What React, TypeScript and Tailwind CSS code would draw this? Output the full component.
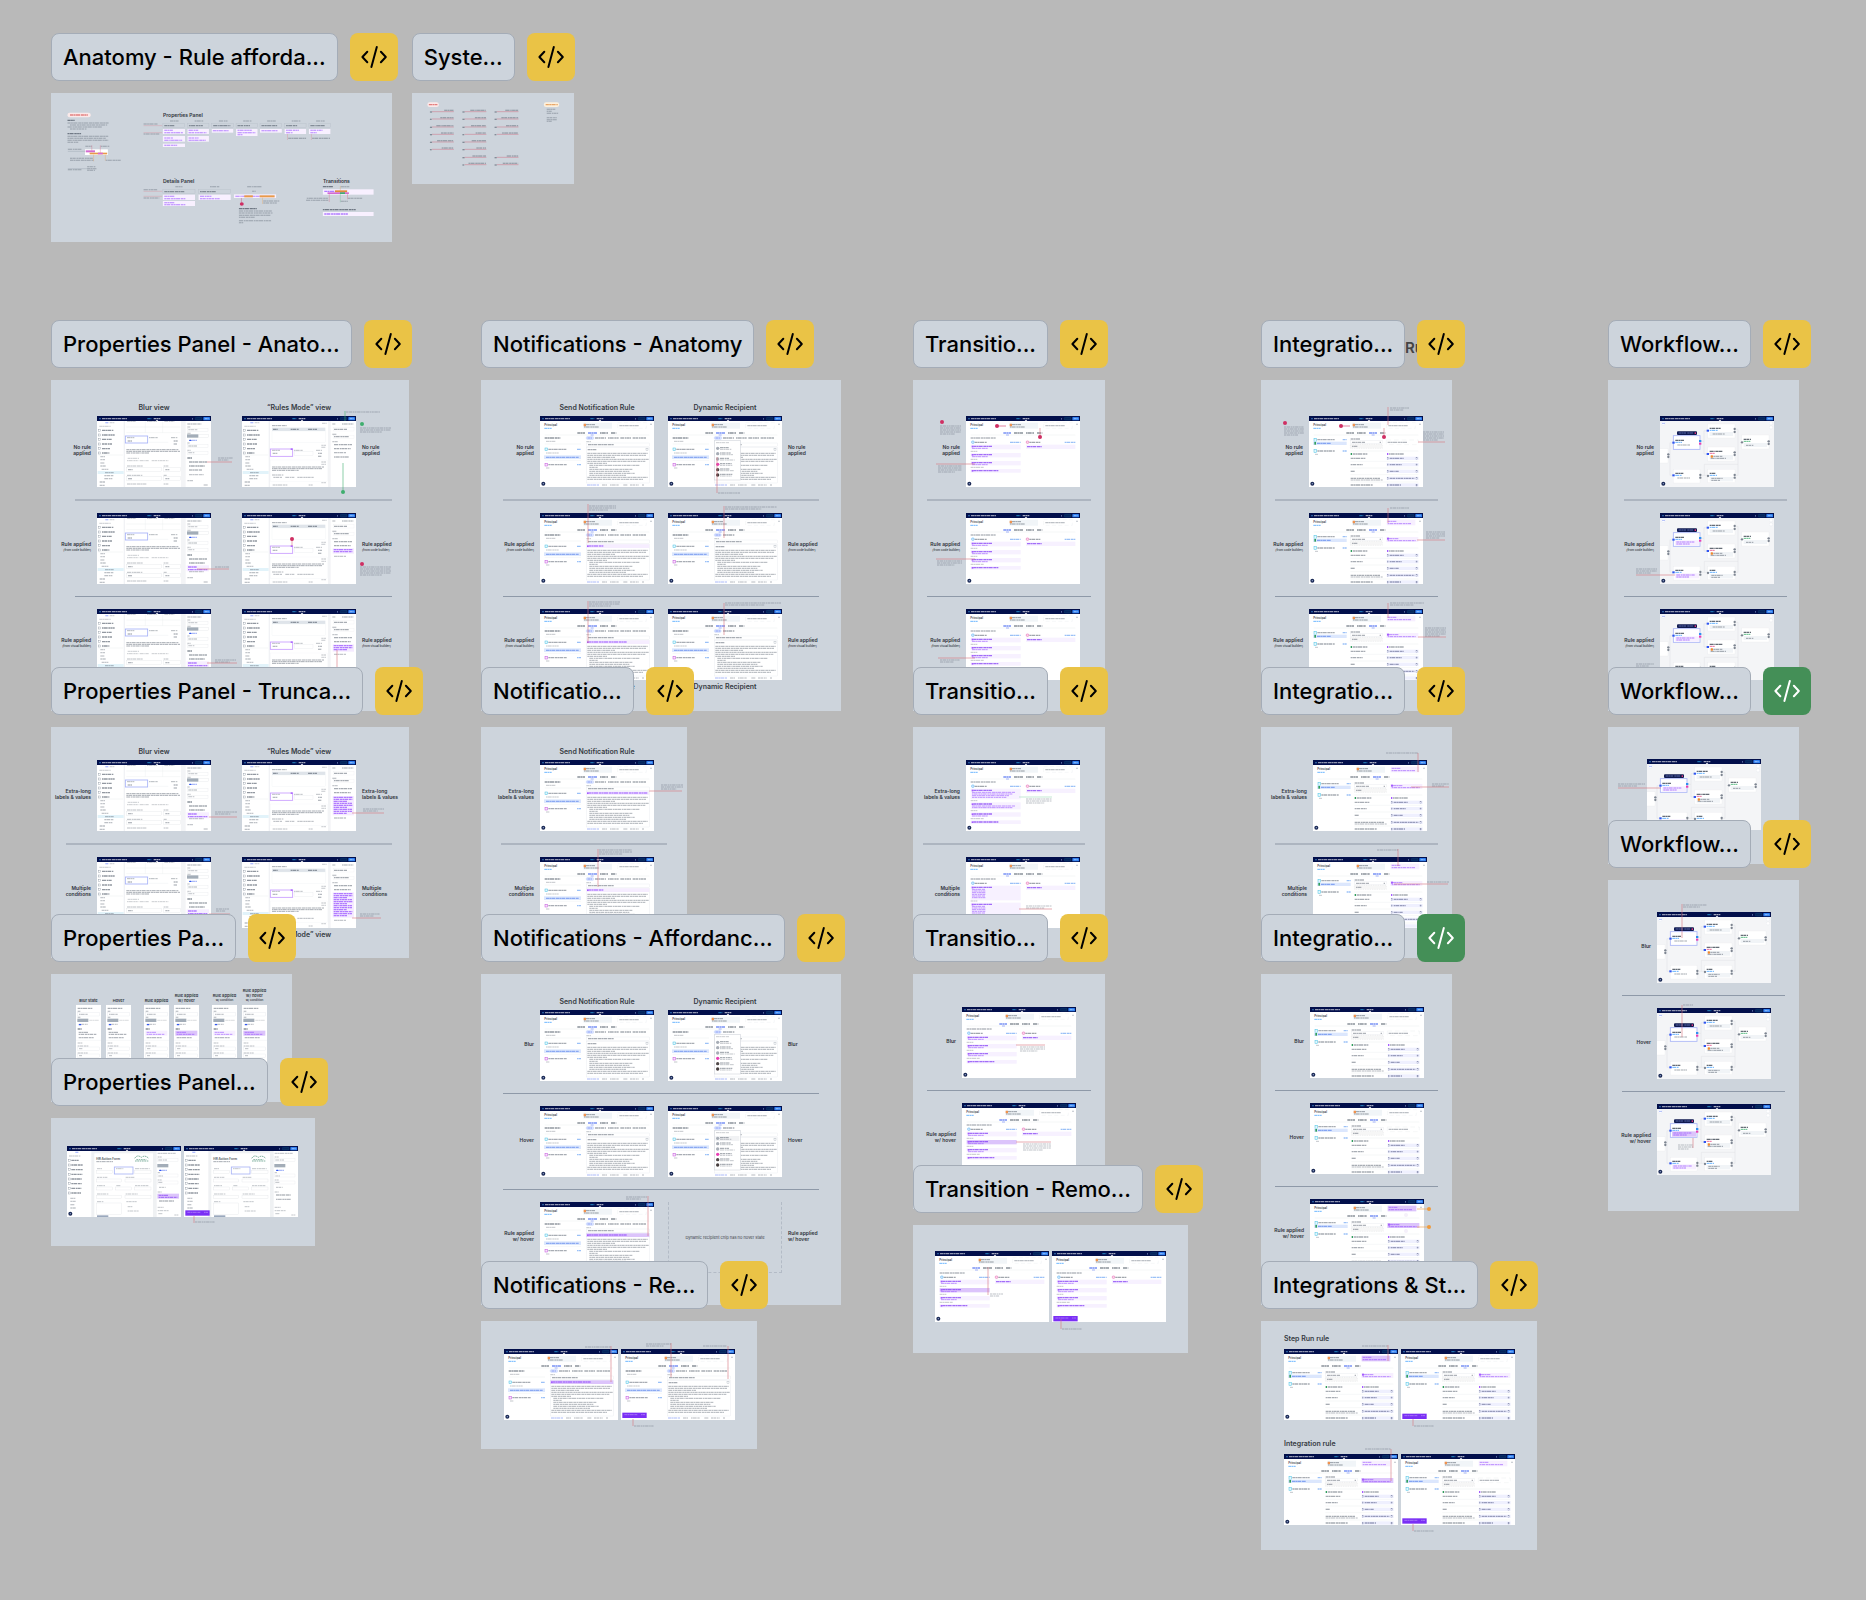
import React from "react";

type Row = number[];

/* ---------- drawing helpers (three units to one canvas pixel) ---------- */

const DASHES = ["9 1 5 1 12 2", "5 1 11 2 7 1", "12 2 4 1 8 1", "7 1 8 2 5 1"];

function Words({ at, c = "#4b5563", h = 4, o = 0.5 }: { at: Row[]; c?: string; h?: number; o?: number }) {
  return (
    <g stroke={c} strokeWidth={h} opacity={o * 0.8}>
      {at.map(([x, y, w], i) => (
        <line key={i} x1={x} y1={y} x2={x + w} y2={y} strokeDasharray={DASHES[i % 4]} />
      ))}
    </g>
  );
}

function Boxes({ at, f = "none", s = "none", w = 1 }: { at: Row[]; f?: string; s?: string; w?: number }) {
  return (
    <g fill={f} stroke={s} strokeWidth={w}>
      {at.map(([x, y, bw, bh], i) => (
        <rect key={i} x={x} y={y} width={bw} height={bh} />
      ))}
    </g>
  );
}

function Rules({ at, s = "#e5e7eb", w = 1 }: { at: Row[]; s?: string; w?: number }) {
  return (
    <g stroke={s} strokeWidth={w}>
      {at.map(([x1, y1, x2, y2], i) => (
        <line key={i} x1={x1} y1={y1} x2={x2} y2={y2} />
      ))}
    </g>
  );
}

function TopBar() {
  return (
    <g>
      <rect width="342" height="15" fill="#020f4b" />
      <Words at={[[15, 8, 75]]} c="#fff" o={0.7} />
      <Words at={[[151, 8, 12]]} c="#38bdf8" o={0.7} />
      <Words at={[[170, 8, 20]]} c="#fff" o={0.8} />
      <rect x="7" y="6" width="4" height="4" fill="#3b7fc4" />
      <rect x="286" y="6" width="2" height="5" fill="#7b8dc0" />
      <rect x="295" y="4" width="20" height="8" rx="3" fill="#06235c" stroke="#135a86" />
      <rect x="319" y="3" width="20" height="10" rx="2" fill="#2f7ff0" />
      <Words at={[[323, 8, 12]]} c="#fff" o={0.5} />
      <path d="M176 15l4-4 4 4z" fill="#fff" />
    </g>
  );
}

function Help() {
  return (
    <g>
      <circle cx="10" cy="203" r="6" fill="#1b2a55" />
      <circle cx="10" cy="203" r="2" fill="#93a4cf" />
    </g>
  );
}

function Sidebar() {
  return (
    <g>
      <Rules at={[[82, 15, 82, 213]]} s="#f1f2f5" w={4} />
      <Words at={[[25, 20, 10]]} c="#3b5bfd" />
      <Words at={[[38, 20, 14]]} o={0.3} />
      <Words at={[[7, 31, 34]]} o={0.3} />
      <Boxes at={[[5, 40, 6, 6], [5, 54, 6, 6], [5, 67, 6, 6], [5, 81, 6, 6], [5, 95, 6, 6], [5, 108, 6, 6]]} s="#7b8592" />
      <Words at={[[15, 43, 34], [15, 57, 38], [15, 70, 30], [15, 84, 30], [15, 98, 24], [15, 111, 22]]} o={0.75} />
      <Rules at={[[4, 117, 78, 117]]} />
      <Words at={[[10, 122, 14], [10, 131, 14], [10, 141, 12], [10, 150, 16], [14, 160, 20]]} o={0.4} />
      <rect x="2" y="165" width="78" height="9" fill="#e2f3fa" />
      <Words at={[[24, 170, 26], [22, 179, 28], [22, 188, 24], [8, 198, 18], [8, 208, 16]]} o={0.45} />
    </g>
  );
}

function PanelBlur({ rule = 0 }: { rule?: number }) {
  return (
    <g>
      <Sidebar />
      <Words at={[[90, 15, 26], [150, 15, 30], [202, 15, 30]]} o={0.7} h={3} />
      <Rules at={[[88, 33, 250, 33], [88, 50, 250, 50], [145, 16, 145, 50], [197, 16, 197, 50]]} />
      <rect x="85" y="60" width="67" height="21" fill="#fff" stroke="#a5b1f7" strokeWidth="2.5" />
      <Words at={[[90, 65, 22], [156, 65, 27], [222, 65, 20]]} o={0.5} h={3} />
      <Words at={[[92, 75, 13], [230, 75, 12], [230, 84, 10]]} />
      <Rules at={[[156, 79, 214, 79]]} />
      <Words at={[[88, 101, 156], [88, 106, 162], [88, 111, 70]]} o={0.6} h={3} />
      <Words at={[[92, 127, 34], [90, 134, 34], [128, 134, 28], [164, 134, 50]]} o={0.35} h={3} />
      <Words at={[[90, 150, 48], [200, 150, 14], [90, 178, 46], [200, 178, 10], [90, 204, 60], [200, 204, 14]]} o={0.45} h={3} />
      <Boxes at={[[88, 155, 105, 12], [200, 155, 51, 12], [88, 182, 105, 11], [200, 182, 51, 11]]} s="#dde0e5" />
      <Words at={[[93, 161, 14], [205, 161, 12], [93, 188, 14], [205, 188, 12]]} />
      <Rules at={[[259, 15, 259, 213]]} s="#f3f4f6" w={14} />
      <Words at={[[271, 24, 42]]} o={0.6} h={3} />
      <Words at={[[271, 33, 10], [274, 41, 28], [271, 52, 10], [271, 81, 8], [274, 90, 26], [271, 103, 10], [274, 110, 18]]} o={0.35} />
      <Boxes at={[[271, 37, 62, 9], [271, 86, 62, 9], [271, 106, 62, 9]]} s="#e5e7eb" />
      <rect x="270" y="55" width="34" height="10" fill="#a3adb8" />
      <rect x="305" y="56" width="30" height="8" fill="none" stroke="#dde0e5" />
      <rect x="276" y="71" width="8" height="4" rx="2" fill="#2f55f0" />
      <Words at={[[285, 73, 16]]} c="#2f55f0" />
      <Words at={[[271, 126, 14]]} o={0.8} />
      {rule > 0 && <rect x="269" y={rule - 4} width="67" height="18" fill="#f6eeff" />}
      <Words at={[[276, 138, 54], [276, 150, 48]]} o={0.6} />
      {rule > 0 ? <Words at={[[273, rule + 1, 26], [273, rule + 9, 58]]} c="#8b3dff" o={0.8} /> : <Words at={[[276, 162, 40]]} />}
      <Words at={[[276, 176, 44], [271, 194, 18], [320, 207, 14]]} o={0.4} />
    </g>
  );
}

function PanelRules({ rule = 0, lines = 2 }: { rule?: number; lines?: number }) {
  return (
    <g>
      <Sidebar />
      <Words at={[[90, 29, 44]]} o={0.6} h={3} />
      <rect x="90" y="35" width="160" height="10" fill="#dfe4ea" />
      <Words at={[[93, 40, 14], [146, 40, 24], [198, 40, 28]]} o={0.7} />
      <Boxes at={[[90, 45, 160, 34]]} s="#eef0f3" />
      <Words at={[[240, 22, 14], [238, 88, 14], [238, 94, 14], [238, 138, 14], [238, 145, 14], [238, 200, 14]]} o={0.3} />
      <rect x="85" y="99" width="67" height="22" fill="#fff" stroke="#c79bff" strokeWidth="2.5" />
      <rect x="146" y="97" width="6" height="5" fill="#b06cff" />
      <Words at={[[90, 103, 24], [156, 103, 26], [222, 103, 18]]} o={0.45} h={3} />
      <Words at={[[92, 112, 14], [228, 112, 12], [228, 121, 10]]} />
      <rect x="157" y="107" width="56" height="11" fill="none" stroke="#e5e7eb" />
      <Words at={[[90, 153, 156], [90, 158, 150], [90, 163, 80]]} o={0.6} h={3} />
      <Words at={[[90, 177, 34], [94, 184, 26], [130, 184, 28], [166, 184, 50]]} o={0.5} h={3} />
      <Boxes at={[[86, 132, 170, 64]]} s="#f1f2f5" />
      <Words at={[[92, 207, 44], [200, 207, 12]]} o={0.45} h={3} />
      <Rules at={[[262, 15, 262, 213]]} s="#f3f4f6" w={8} />
      <Words at={[[271, 24, 10], [300, 24, 34], [271, 55, 12], [271, 77, 18]]} o={0.4} />
      <Words at={[[276, 40, 40], [276, 62, 44], [276, 86, 54], [276, 98, 50]]} o={0.6} />
      <Boxes at={[[274, 35, 62, 10], [274, 58, 62, 9]]} s="#eceef1" />
      {rule > 0 ? (
        <g>
          <rect x="272" y={rule - 4} width="64" height={lines * 6 + 4} fill="#f5ebff" />
          <Words at={Array.from({ length: lines }, (_, i) => [275, rule + i * 6, i % 3 === 2 ? 40 : 56])} c="#8b3dff" o={0.8} />
          <Words at={[[276, rule + lines * 6 + 8, 36]]} o={0.4} />
        </g>
      ) : (
        <Words at={[[276, 110, 36], [276, 123, 44]]} o={0.5} />
      )}
    </g>
  );
}

function Principal({ x }: { x: number }) {
  return (
    <text x={x} y="30" fontSize="9" fontWeight="600" fill="#3a414c" fontFamily="Inter, sans-serif">
      Principal
    </text>
  );
}

function TaskHead({ x, tab, rule = 0 }: { x: number; tab: number; rule?: number }) {
  const tabs = [[112, 51, 23], [144, 51, 27], [180, 51, 24], [213, 51, 16]];
  return (
    <g>
      <Principal x={x} />
      <Words at={[[x, 37, 22]]} c="#1e90ff" o={0.8} h={3} />
      <rect x={x + 117} y="20" width="86" height="18" fill="#f1f5f8" />
      <rect x={x + 118} y="23" width="7" height="8" rx="1" fill="#f08030" opacity="0.85" />
      <Words at={[[x + 125, 26, 27], [x + 119, 33, 46]]} o={0.7} h={3} />
      {rule > 0 ? (
        <g>
          <rect x={x + 220} y="20" width="86" height="17" fill={rule > 1 ? "#dcc4fb" : "#f7efff"} />
          <Words at={[[x + 223, 25, 26], [x + 223, 32, 70]]} c="#8b3dff" o={0.7} h={3} />
        </g>
      ) : (
        <g>
          <rect x={x + 220} y="20" width="86" height="17" fill="none" stroke="#e3e6ea" strokeDasharray="12 7" />
          <Words at={[[x + 225, 29, 58]]} o={0.45} />
        </g>
      )}
      <rect x="331" y="23" width="4" height="4" fill="#b6bcc5" />
      <Words at={tabs.filter((_, i) => i !== tab)} o={0.8} />
      <Words at={[tabs[tab]]} c="#2f55f0" o={0.8} />
      <Rules at={[[14, 57, 328, 57]]} />
      <Rules at={[[tabs[tab][0] + 8, 57, tabs[tab][0] + 17, 57]]} s="#7a8ff8" w={2} />
    </g>
  );
}

function Toast({ y }: { y: number }) {
  return (
    <g>
      <rect x="4" y={y} width="73" height="16" fill="#7a2ff5" />
      <Words at={[[10, y + 6, 40], [60, y + 6, 12]]} c="#fff" o={0.4} h={3} />
    </g>
  );
}

function Notify({ rule = 0, menu = 0, alt = 0, toast = 0 }: { rule?: number; menu?: number; alt?: number; toast?: number }) {
  const widths = [182, 176, 84, 184, 174, 60, 150, 26, 130, 120, 136, 110, 182, 168];
  return (
    <g>
      <TaskHead x={13} tab={1} />
      <Words at={[[14, 66, 47]]} o={0.75} />
      <Words at={[[18, 76, 29], [18, 111, 38], [18, 156, 10]]} o={0.4} h={3} />
      <Rules at={[[14, 84, 123, 84], [14, 133, 123, 133]]} />
      <rect x="15" y="96" width="8" height="8" fill="#e2f7fd" stroke="#43bfe4" strokeWidth="1.5" />
      <rect x="15" y="142" width="8" height="8" fill="#fae4fb" stroke="#c04bdc" strokeWidth="1.5" />
      <Words at={[[25, 100, 54], [25, 146, 56]]} o={0.6} />
      <Words at={[[111, 100, 12], [111, 146, 12]]} c="#2f7ff0" o={0.6} />
      <rect x="12" y="118" width="111" height="11" fill="#dce7fd" />
      <Words at={[[18, 124, 98]]} c="#3568e8" o={0.6} />
      <rect x="139" y="62" width={alt ? 20 : 22} height="8" rx="3" fill="#f3f6ff" stroke="#8aa6f8" />
      <Words at={[[142, 66, 16]]} c="#2f55f0" />
      <Words at={alt ? [[165, 66, 34]] : [[165, 66, 33], [204, 66, 32], [241, 66, 32], [278, 66, 40]]} o={0.6} />
      <Words at={[[139, 77, 14]]} o={0.4} h={3} />
      <Boxes at={[[139, 81, 189, 10], [139, 95, 189, 106]]} s="#e2e5e9" />
      <Words at={[[144, 86, 78]]} o={0.6} />
      {rule > 0 ? (
        <g>
          <rect x="139" y="94" width="189" height="11" fill={rule === 3 ? "#dcc4fb" : "#f6edff"} />
          <rect x="141" y="97" width="5" height="5" fill="#a55cff" />
          <Words at={[[146, 99, rule === 1 ? 44 : rule === 4 ? 176 : 114]]} c="#8b3dff" o={0.75} />
        </g>
      ) : (
        <g>
          <Words at={[[143, 101, 26]]} o={0.6} />
          <rect x="318" y="98" width="6" height="6" fill="none" stroke="#9aa3af" />
        </g>
      )}
      <Words at={widths.map((w, i) => [i > 5 && i < 12 ? 148 : 142, 112 + i * 6, w])} h={3} o={0.55} />
      <Words at={[[141, 207, 36]]} c="#2f55f0" h={3} />
      <Words at={[[186, 207, 16], [210, 207, 26], [250, 207, 14], [270, 207, 26], [306, 207, 6]]} h={3} />
      {menu > 0 && (
        <g>
          <rect x="139" y="73" width="78" height="119" fill="#fff" stroke="#d5d9de" strokeWidth="2" />
          <Words at={[[144, 80, 40]]} o={0.35} h={3} />
          {menu > 1 && <rect x="142" y="90" width="72" height="15" fill="#f1f2f4" />}
          {["#a7adb6", "#a7adb6", "#a7adb6", "#e83fb4", "#514a4a", "#453d3d"].map((c, i) => (
            <circle key={i} cx="149" cy={97 + i * 16} r="5" fill={c} />
          ))}
          <Words at={[0, 1, 2, 3, 4, 5].map((i) => [156, 95 + i * 16, 26 + ((i * 7) % 12)])} o={0.7} h={3} />
          <Words at={[0, 1, 2, 3, 4, 5].map((i) => [156, 100 + i * 16, 34 + ((i * 5) % 12)])} o={0.4} h={3} />
        </g>
      )}
      {toast > 0 ? <Toast y={191} /> : <Help />}
    </g>
  );
}

function Transit({ kind = 0, toast = 0 }: { kind?: number; toast?: number }) {
  const layouts: Row[][] = [
    [[86, 14], [111, 13], [135, 13], [159, 11]],
    [[86, 32], [127, 21], [157, 13], [181, 11]],
    [[86, 44], [137, 44]],
  ];
  const blocks = layouts[kind > 2 ? 0 : kind];
  return (
    <g>
      <TaskHead x={13} tab={0} />
      <Words at={[[14, 66, 76]]} o={0.75} h={3} />
      <rect x="17" y="75" width="7" height="7" rx="2" fill="#def0fe" stroke="#3ba0ee" strokeWidth="1.5" />
      <rect x="181" y="75" width="7" height="7" rx="2" fill="#fde3f2" stroke="#e04fa5" strokeWidth="1.5" />
      <Words at={[[26, 79, 36], [190, 79, 34]]} o={0.65} />
      <Words at={[[132, 79, 32], [296, 79, 32]]} c="#2f7ff0" o={0.6} />
      <rect x="180" y="86" width="148" height="13" fill="#f7f1ff" />
      <Words at={[[183, 92, 44]]} c="#7a2ff5" o={0.85} />
      {blocks.map(([y, h], i) => (
        <g key={i}>
          <rect x="14" y={y} width="150" height={h} fill={kind === 3 && i === 1 ? "#dcc4fb" : "#f7f1ff"} />
          <rect x="17" y={y + 3} width="5" height="5" fill="#a55cff" />
          <Words at={[[22, y + 5, i === 3 ? 76 : 56]]} c="#7a2ff5" o={0.85} />
          <Words
            at={Array.from({ length: Math.floor((h - 4) / 6) }, (_, k) => [18, y + 11 + k * 5, h > 16 ? (kind === 2 ? 40 : 130 - k * 9) : 48])}
            c="#8b3dff"
            o={h > 12 ? 0.65 : 0}
            h={3}
          />
          {i > 0 && <Words at={[[14, y - 5, i === 3 ? 40 : 20]]} o={0.4} h={3} />}
        </g>
      ))}
      {toast > 0 ? <Toast y={195} /> : <Help />}
    </g>
  );
}

function Integrate({ head = 0, card = 0, toast = 0 }: { head?: number; card?: number; toast?: number }) {
  const rows = [127, 146, 166, 187, 207];
  return (
    <g>
      <TaskHead x={13} tab={2} rule={head} />
      <rect x="15" y="67" width="7" height="9" fill="#e2f7fd" stroke="#43bfe4" strokeWidth="1.5" />
      <rect x="12" y="77" width="101" height="10" fill="#dce7fd" />
      <rect x="16" y="78" width="5" height="8" fill="#2f9e5b" />
      <rect x="15" y="101" width="8" height="8" fill="#e2f7fd" stroke="#43bfe4" strokeWidth="1.5" />
      <Words at={[[25, 71, 52], [25, 105, 52]]} o={0.6} />
      <Words at={[[101, 71, 12], [101, 105, 12]]} c="#2f7ff0" o={0.6} />
      <Words at={[[24, 82, 42]]} c="#3568e8" o={0.65} />
      <Words at={[[18, 115, 10]]} o={0.4} h={3} />
      <Words at={[[125, 69, 30]]} o={0.8} h={3} />
      <rect x="124" y="73" width="96" height="10" fill="#fff" stroke="#e2e5e9" />
      <rect x="124" y="85" width="96" height="12" fill="#f6f6f6" stroke="#d8dbdf" strokeDasharray="4 3" />
      <Words at={[[129, 79, 40], [129, 91, 16], [212, 79, 4]]} o={0.55} />
      {card > 0 ? (
        <g>
          <rect x="232" y="72" width="96" height="15" fill={card > 1 ? "#dcc4fb" : "#f7efff"} />
          <rect x="234" y="74" width="6" height="6" fill="#a55cff" />
          <Words at={[[240, 77, 28], [236, 83, 84]]} c="#8b3dff" o={0.7} h={3} />
        </g>
      ) : (
        <g>
          <rect x="232" y="72" width="96" height="14" fill="none" stroke="#e5e7eb" strokeDasharray="14 9" />
          <Words at={[[236, 79, 58]]} o={0.5} />
        </g>
      )}
      <rect x="125" y="111" width="4" height="6" fill="#2f9e5b" />
      <rect x="234" y="111" width="4" height="6" fill="#a55cff" />
      <Words at={[[131, 114, 44], [240, 114, 46]]} o={0.6} />
      <Rules at={[[124, 105, 328, 105], [124, 136, 328, 136], [124, 156, 328, 156], [124, 176, 328, 176], [124, 198, 328, 198]]} />
      <Boxes at={rows.map((y) => [233, y - 5, 96, 10])} f="#eff0fe" />
      <Words at={rows.map((y, i) => [125, y, [44, 36, 12, 90, 66][i]])} o={0.6} />
      <Words at={[[125, 192, 96]]} o={0.5} h={3} />
      <Words at={rows.map((y, i) => [242, y, [42, 36, 28, 74, 34][i]])} c="#4a5080" o={0.65} />
      <Boxes at={[...rows.map((y) => [235, y - 2, 4, 5]), ...rows.map((y) => [321, y - 2, 4, 5])]} s="#8a90b0" />
      {toast > 0 ? <Toast y={toast} /> : <Help />}
    </g>
  );
}

function Flow({ rule = 0 }: { rule?: number }) {
  const nodes = [[-2, 98, 26, 43], [143, 24, 82, 42], [143, 93, 82, 42], [245, 57, 82, 42], [40, 160, 80, 41], [143, 160, 82, 40]];
  return (
    <g>
      <rect y="15" width="342" height="198" fill="#f4f5f7" />
      <Rules
        at={[[30, 80, 30, 178], [30, 80, 38, 80], [30, 178, 38, 178], [24, 119, 30, 119], [120, 76, 132, 76], [132, 44, 132, 114], [132, 44, 142, 44], [132, 114, 142, 114], [133, 145, 234, 145], [234, 40, 234, 178], [225, 40, 234, 40], [225, 178, 234, 178], [122, 178, 142, 178], [133, 145, 133, 178]]}
        s="#d4d8de"
      />
      <Boxes at={nodes} f="#fff" s="#e9ebee" />
      <rect x="40" y="59" width="80" height="41" fill="#fff" stroke="#a9b4f6" strokeWidth="2.5" />
      <rect x="51" y="46" width="60" height="11" rx="3" fill="#101b52" />
      <Words at={[[56, 51, 22], [82, 51, 18]]} c="#9fb3ff" o={0.6} h={3} />
      <rect x="104" y="49" width="4" height="5" fill="#e0367c" />
      <Words at={[[46, 73, 26], [149, 37, 34], [149, 106, 38], [251, 70, 22], [46, 172, 24], [149, 172, 18]]} c="#1f2937" o={0.85} />
      <Words at={[[46, 79, 20], [149, 43, 24], [46, 178, 20], [149, 178, 22]]} c="#1e90ff" o={0.85} h={3} />
      <Words at={[[149, 112, 16]]} c="#e0367c" o={0.9} h={3} />
      <Words at={[[251, 76, 20]]} c="#22a55b" o={0.9} h={3} />
      <Boxes at={[[149, 48, 70, 12], [149, 117, 70, 14], [251, 81, 70, 12], [149, 183, 70, 13]]} f="#f1f4f7" />
      <Words at={[[158, 54, 36], [160, 121, 28], [152, 127, 46], [258, 88, 22], [154, 187, 34], [154, 193, 26]]} o={0.65} h={3} />
      <rect x="152" y="118" width="7" height="7" rx="2" fill="#f08a30" />
      {rule > 0 ? (
        <g>
          <rect x="45" y="82" width="72" height="16" fill={rule > 1 ? "#dcc4fb" : "#f7efff"} />
          <rect x="45" y="181" width="72" height="15" fill="#f7efff" />
          <Words at={[[49, 87, 54], [49, 93, 40], [49, 186, 56], [49, 192, 38]]} c="#8b3dff" o={0.8} h={3} />
        </g>
      ) : (
        <Words at={[[52, 87, 38], [52, 186, 38]]} o={0.4} />
      )}
      <Boxes at={[[37, 77, 7, 6], [140, 41, 7, 6], [140, 111, 7, 6], [37, 175, 7, 6]]} f="#2f55f0" />
      <rect x="117" y="72" width="7" height="6" fill="#2f8ff0" />
      <rect x="117" y="80" width="7" height="6" fill="#e83fb4" />
      <g fill="#7d8591">
        {[[25, 115], [25, 123], [224, 39], [224, 48], [224, 109], [224, 117], [121, 177], [121, 185], [246, 79], [326, 76], [326, 84], [224, 177], [224, 185], [144, 180]].map(([x, y], i) => (
          <circle key={i} cx={x} cy={y} r="3.5" />
        ))}
      </g>
      <circle cx="10" cy="22" r="6" fill="#fff" stroke="#dfe3f5" />
      <circle cx="333" cy="22" r="5" fill="#fff" stroke="#e2e5e9" />
      <circle cx="333" cy="34" r="5" fill="#fff" stroke="#e2e5e9" />
      <Words at={[[6, 22, 9]]} c="#2f55f0" h={3} />
      <Help />
    </g>
  );
}

function HrForm({ toast = 0 }: { toast?: number }) {
  const items = [0, 1, 2, 3, 4, 5, 6, 7];
  return (
    <g>
      <rect x="73" y="15" width="196" height="198" fill="#eff1f3" />
      <rect x="82" y="22" width="176" height="191" fill="#fff" />
      <Words at={[[25, 19, 10]]} c="#3b5bfd" />
      <Words at={[[6, 30, 34]]} o={0.3} />
      <Boxes at={items.map((i) => [4, 40 + i * 14, 6, 6])} s="#7b8592" />
      <Words at={items.map((i) => [13, 43 + i * 14, 22 + ((i * 13) % 14)])} o={0.75} />
      <Words at={[[10, 157, 16], [10, 166, 16], [10, 176, 14], [10, 186, 18]]} o={0.4} />
      <text x="88" y="41" fontSize="9.5" fontWeight="600" fill="#3b424c" fontFamily="Inter, sans-serif">
        HR Action Form
      </text>
      <Words at={[[88, 47, 50]]} o={0.6} h={3} />
      <path d="M203 37c6-9 12-9 20-3 7-5 14-5 21 2M204 45h40M208 41h30" fill="none" stroke="#6ba38e" strokeWidth="2.5" strokeDasharray="5 2" />
      <rect x="142" y="63" width="56" height="21" fill="#fff" stroke="#a9b4f6" strokeWidth="2.5" />
      <Words at={[[90, 68, 16], [147, 68, 22], [204, 68, 44], [90, 94, 32], [176, 94, 26], [90, 119, 24], [148, 119, 12], [204, 119, 40], [90, 144, 34], [176, 144, 36], [90, 167, 20], [178, 167, 32], [182, 182, 14], [182, 195, 34]]} o={0.4} h={3} />
      <Boxes at={[[88, 74, 48, 8], [202, 74, 50, 8], [88, 99, 76, 9], [174, 99, 78, 9], [88, 123, 48, 9], [146, 123, 48, 9], [202, 123, 50, 9], [88, 148, 76, 9], [174, 148, 78, 9], [88, 171, 76, 34]]} s="#dde0e5" />
      <rect x="90" y="208" width="34" height="5" fill="#9aa8bd" />
      <Words at={[[272, 22, 54], [272, 33, 12], [274, 42, 26], [272, 80, 8], [274, 90, 14], [272, 102, 12], [274, 109, 12], [276, 124, 20], [272, 138, 12]]} o={0.45} h={3} />
      <Boxes at={[[271, 37, 62, 9], [271, 84, 62, 9], [271, 105, 62, 9]]} s="#e5e7eb" />
      <rect x="271" y="54" width="33" height="10" fill="#a3adb8" />
      <rect x="276" y="71" width="8" height="4" rx="2" fill="#2f55f0" />
      <Words at={[[285, 73, 16]]} c="#2f55f0" />
      {toast > 0 ? (
        <Words at={[[276, 147, 44], [276, 160, 46]]} />
      ) : (
        <g>
          <rect x="271" y="143" width="65" height="15" fill="#dcc4fb" />
          <Words at={[[275, 148, 30], [275, 154, 56]]} c="#7a2ff5" o={0.8} h={3} />
          <Words at={[[276, 165, 46]]} />
        </g>
      )}
      <Words at={[[272, 184, 18], [272, 194, 34], [274, 203, 12], [322, 207, 12]]} o={0.4} h={3} />
      {toast > 0 ? <Toast y={193} /> : <Help />}
    </g>
  );
}

function SideCard({ rule = 0 }: { rule?: number }) {
  return (
    <g>
      <Words at={[[5, 10, 44]]} o={0.7} h={3} />
      <Words at={[[5, 19, 8], [9, 28, 26], [5, 37, 8], [9, 58, 26]]} o={0.4} />
      <Boxes at={[[5, 23, 65, 10], [5, 126, 65, 10], [5, 147, 65, 10]]} s="#e2e5e9" />
      <rect x="4" y="41" width="33" height="10" fill="#a3adb8" />
      <Words at={[[40, 46, 30]]} o={0.2} />
      <rect x="8" y="57" width="8" height="4" rx="2" fill="#2f55f0" />
      <Words at={[[5, 72, 12]]} o={0.8} />
      {rule > 1 ? <rect x="4" y="77" width="66" height="15" fill={rule > 2 ? "#dcc4fb" : "#f7efff"} /> : null}
      <Words at={[[8, 82, 30], [8, 88, 54]]} c={rule > 1 ? "#8b3dff" : "#4b5563"} o={0.65} h={3} />
      <Words at={[[8, 98, 46]]} />
      <Rules at={[[0, 106, 75, 106]]} />
      <Words at={[[5, 114, 14], [5, 123, 32], [9, 131, 10], [5, 144, 30], [9, 152, 10]]} o={0.45} h={3} />
    </g>
  );
}

/* ---------- annotations drawn over a frame ---------- */

const RED = "#d7737e";
const PINK = "#cf2f63";
const GREEN = "#3fae6e";
const ORANGE = "#ee9a3d";

function Marks({ l = [], n = [], d = [] }: { l?: (number | string)[][]; n?: Row[]; d?: (number | string)[][] }) {
  return (
    <svg className="pointer-events-none absolute inset-0 h-full w-full overflow-visible" aria-hidden="true">
      {l.map(([x1, y1, x2, y2, c = RED], i) => (
        <line key={"l" + i} x1={x1} y1={y1} x2={x2} y2={y2} stroke={c as string} strokeWidth="0.6" />
      ))}
      {d.map(([x, y, c = PINK], i) => (
        <circle key={"d" + i} cx={x} cy={y} r="2" fill={c as string} />
      ))}
      {n.map(([x, y, w, k], i) =>
        Array.from({ length: k }, (_, j) => (
          <line
            key={"n" + i + "-" + j}
            x1={x}
            y1={y + j * 2}
            x2={x + (j === k - 1 && k > 1 ? w * 0.7 : w)}
            y2={y + j * 2}
            stroke="#5b6472"
            strokeOpacity="0.5"
            strokeWidth="0.8"
            strokeDasharray={j % 2 ? "3 0.6 1.5 0.5 4 0.6" : "2 0.5 3.5 0.6 1.5 0.5"}
          />
        )),
      )}
    </svg>
  );
}

/* ---------- canvas building blocks ---------- */

function Thumb({ children }: { children: React.ReactNode }) {
  return (
    <svg className="block h-[71px] w-[114px] shrink-0 bg-white" viewBox="0 0 342 213" aria-hidden="true">
      {children}
      <TopBar />
    </svg>
  );
}

function Tag({ name, ready }: { name: string; ready?: boolean }) {
  return (
    <header className="relative z-10 flex items-center gap-3">
      <h2 className="flex h-12 items-center rounded-lg border border-[#a4acb7] bg-[#cdd4dc] px-[11px] text-[22px] leading-7 font-medium whitespace-nowrap text-black">
        {name}
      </h2>
      <button
        type="button"
        aria-label={ready ? "Ready for development" : "View code"}
        className={ready ? "size-12 rounded-lg bg-[#448f57] text-white" : "size-12 rounded-lg bg-[#eac346] text-black"}
      >
        <svg viewBox="0 0 48 48" className="size-12" fill="none" stroke="currentColor" strokeWidth="2" strokeLinecap="round" strokeLinejoin="round" aria-hidden="true">
          <path d="M17.3 18.8 12.4 24l4.9 5.2M26.8 14 21.4 34M30.9 18.8 35.8 24l-4.9 5.2" />
        </svg>
      </button>
    </header>
  );
}

function Item({ name, ready, size, behind, children }: { name: string; ready?: boolean; size: string; behind?: string; children: React.ReactNode }) {
  return (
    <section className="relative isolate flex flex-col items-start gap-3">
      {behind && <span className="absolute top-5 left-36 text-[15px] leading-4 font-semibold text-[#444]">{behind}</span>}
      <Tag name={name} ready={ready} />
      <div className={"relative bg-[#cdd4dc] " + size}>{children}</div>
    </section>
  );
}

/* Each frame in a column reaches 44px under the tag of the next one. */
function Column({ children }: { children: React.ReactNode }) {
  return <div className="flex flex-col items-start [&>section+section]:-mt-11">{children}</div>;
}

type Band = { side: string[]; sub?: string; thumbs: React.ReactNode[]; thick?: boolean };

function Side({ lines, sub, className }: { lines: string[]; sub?: string; className: string }) {
  return (
    <div className={"shrink-0 pb-1 text-[5px] leading-[6px] font-semibold whitespace-nowrap text-[#2e333b] " + className}>
      {lines.map((t) => (
        <p key={t}>{t}</p>
      ))}
      {sub && <p className="text-[3px] font-medium">{sub}</p>}
    </div>
  );
}

function Titles({ names, label, gap }: { names: string[]; label: string; gap: string }) {
  return (
    <div className="flex gap-1.5">
      <div className={"shrink-0 " + label} />
      <div className={"flex " + gap}>
        {names.map((t) => (
          <h3 key={t} className="w-[114px] text-center text-[7px] leading-[8px] font-semibold whitespace-nowrap text-[#363b43]">
            {t}
          </h3>
        ))}
      </div>
    </div>
  );
}

function Sheet({
  top,
  label,
  gap = "gap-3.5",
  titles,
  foot,
  rule,
  right,
  bands,
}: {
  top: string;
  label: string;
  gap?: string;
  titles?: string[];
  foot?: string[];
  rule: string;
  right?: boolean;
  bands: Band[];
}) {
  return (
    <div className="flex flex-col">
      <div className={"flex flex-col justify-end pb-1 " + top}>{titles && <Titles names={titles} label={label} gap={gap} />}</div>
      {bands.map((b, i) => (
        <React.Fragment key={i}>
          {i > 0 && <hr className={(b.thick ? "my-3 h-0.5 border-0 bg-[#adb5c0] " : "my-3 h-px border-0 bg-[#8e99a8] ") + rule} />}
          <div className="flex items-center gap-1.5">
            <Side lines={b.side} sub={b.sub} className={"text-right " + label} />
            <div className={"flex shrink-0 " + gap}>
              {b.thumbs.map((t, k) => (
                <React.Fragment key={k}>{t}</React.Fragment>
              ))}
            </div>
            {right && <Side lines={b.side} sub={b.sub} className="text-left" />}
          </div>
        </React.Fragment>
      ))}
      {foot && (
        <div className="pt-[3px]">
          <Titles names={foot} label={label} gap={gap} />
        </div>
      )}
    </div>
  );
}

const CODE = "(from code builder)";
const VISUAL = "(from visual builder)";
const HOVER = ["Rule applied", "w/ hover"];
const VIEWS = ["Blur view", "“Rules Mode” view"];
const NOTICES = ["Send Notification Rule", "Dynamic Recipient"];

function anatomy(rows: React.ReactNode[][]): Band[] {
  return [
    { side: ["No rule", "applied"], thumbs: rows[0] },
    { side: ["Rule applied"], sub: CODE, thumbs: rows[1], thick: true },
    { side: ["Rule applied"], sub: VISUAL, thumbs: rows[2] },
  ];
}

function truncation(rows: React.ReactNode[][]): Band[] {
  return [
    { side: ["Extra-long", "labels & values"], thumbs: rows[0] },
    { side: ["Multiple", "conditions"], thumbs: rows[1], thick: true },
  ];
}

function affordance(rows: React.ReactNode[][]): Band[] {
  const sides = rows.length === 2 ? [["Blur"], HOVER] : [["Blur"], ["Hover"], HOVER];
  return rows.map((thumbs, i) => ({ side: sides[i], thumbs }));
}

function Pair({ top, left, title, children }: { top: string; left: string; title?: string; children: React.ReactNode }) {
  return (
    <div className={left}>
      <div className={"flex items-end pb-1.5 " + top}>
        {title && <h3 className="text-[7px] leading-[8px] font-semibold text-[#363b43]">{title}</h3>}
      </div>
      <div className="flex gap-[3px]">{children}</div>
    </div>
  );
}

function AffordanceSheet() {
  const cols = [372, 441, 509, 577, 644, 713, 781];
  return (
    <>
      <svg className="absolute inset-0 h-full w-full" viewBox="0 0 341 149" aria-hidden="true">
        <g transform="translate(-21 -73) scale(0.35714 0.33333)">
          <rect x="105" y="278" width="65" height="14" rx="6" fill="#fbe9e9" />
          <Words at={[[112, 285, 50]]} c="#d64545" o={0.8} />
          <Words at={[[105, 301, 20], [105, 341, 38]]} o={0.9} />
          <Words at={[[105, 309, 115], [112, 315, 104], [105, 321, 96], [112, 327, 46], [105, 349, 114], [105, 355, 108], [105, 361, 114], [105, 367, 30]]} o={0.5} h={3} />
          <Words at={[[155, 379, 18], [198, 379, 24], [106, 388, 38], [112, 415, 64], [112, 421, 66], [212, 421, 42], [106, 449, 38], [160, 440, 24], [160, 446, 26], [160, 451, 22]]} o={0.5} h={3} />
          <rect x="154" y="388" width="64" height="17" fill="#fff" />
          <rect x="156" y="391" width="26" height="6" fill="#d36bd0" />
          <rect x="167" y="398" width="49" height="5" fill="#e89a4a" />
          <rect x="190" y="398" width="14" height="5" fill="#d36bd0" />
          <Rules at={[[173, 376, 173, 392], [197, 376, 197, 398]]} s="#dd6680" />
          <Rules at={[[178, 404, 178, 424], [211, 404, 211, 422]]} s="#e8a05a" />
          <Rules at={[[106, 394, 154, 394], [106, 446, 160, 446]]} s="#8d97a5" />
          <Words at={cols.map((x) => [x + 20, 303, 24])} o={0.5} h={3} />
          <Words at={[[318, 312, 40], [318, 342, 44], [318, 509, 38], [318, 534, 44]]} o={0.5} h={3} />
          <Rules at={[[318, 317, 370, 317], [318, 338, 370, 338], [318, 514, 370, 514], [318, 529, 370, 529]]} s="#d98893" />
          <Boxes at={cols.map((x) => [x, 310, 60, 13])} s="#b4bcc7" />
          <Words at={cols.map((x, i) => [x + 4, 317, 30 + ((i * 9) % 22)])} o={0.7} />
          <Boxes at={[[372, 327, 62, 15], [441, 327, 60, 15], [509, 327, 60, 11], [577, 327, 60, 21], [644, 327, 61, 11], [713, 327, 60, 15], [781, 327, 60, 15], [372, 348, 62, 17], [441, 348, 60, 17], [372, 371, 62, 10]]} f="#f8f0ff" />
          <Words at={[[376, 331, 24], [376, 338, 52], [444, 331, 28], [444, 338, 50], [512, 332, 44], [581, 331, 40], [581, 338, 50], [581, 344, 14], [648, 332, 46], [717, 331, 36], [717, 338, 18], [785, 331, 34], [785, 338, 18], [376, 354, 24], [376, 361, 50], [444, 354, 28], [444, 361, 48], [376, 376, 36]]} c="#8b3dff" o={0.75} h={3} />
          <Rules at={[[721, 342, 721, 360], [788, 342, 788, 360]]} s="#d98893" />
          <Words at={[[723, 355, 50], [790, 355, 50]]} o={0.6} h={3} />
          <Words at={[[407, 500, 20], [504, 500, 26], [608, 500, 40], [622, 514, 10]]} o={0.5} h={3} />
          <Boxes at={[[372, 509, 90, 12], [472, 509, 90, 12]]} s="#b4bcc7" />
          <Words at={[[376, 515, 56], [476, 515, 44]]} o={0.7} />
          <Boxes at={[[372, 524, 90, 16], [472, 524, 90, 16], [372, 543, 90, 15], [571, 523, 118, 11]]} f="#f8f0ff" />
          <Words at={[[376, 529, 30], [376, 536, 60], [476, 529, 32], [476, 536, 56], [376, 548, 30], [376, 554, 60], [575, 529, 70]]} c="#8b3dff" o={0.75} h={3} />
          <Boxes at={[[600, 526, 24, 6], [643, 526, 42, 6]]} f="#e89a4a" />
          <Rules at={[[592, 534, 592, 548]]} s={PINK} />
          <circle cx="593" cy="552" r="5.5" fill={PINK} />
          <Rules at={[[651, 533, 651, 552]]} s="#e8a05a" />
          <Words at={[[585, 566, 50]]} o={0.9} />
          <Words at={[[653, 543, 46], [653, 549, 38], [585, 573, 92], [585, 579, 94], [585, 586, 88], [585, 592, 44], [585, 602, 90], [585, 608, 12]]} o={0.5} h={3} />
          <Words at={[[820, 500, 28], [820, 569, 92]]} o={0.9} />
          <Words at={[[870, 500, 24], [775, 535, 60], [773, 541, 62], [890, 535, 42], [870, 544, 20]]} o={0.5} h={3} />
          <Boxes at={[[820, 508, 142, 16], [820, 576, 142, 12]]} f="#f8f0ff" />
          <Words at={[[824, 514, 30], [824, 582, 66]]} c="#8b3dff" o={0.8} />
          <rect x="854" y="511" width="34" height="6" fill="#e08a3c" />
          <rect x="833" y="517" width="60" height="5" fill="#d36bd0" />
          <rect x="868" y="517" width="14" height="5" fill="#3fae6e" />
          <Rules at={[[838, 522, 838, 546], [889, 522, 889, 538]]} s="#dd6680" />
          <Rules at={[[869, 498, 869, 512]]} s="#e8a05a" />
          <Rules at={[[869, 522, 869, 547]]} s="#6bb98d" />
        </g>
      </svg>
      <div className="flex flex-col gap-[60px] pt-[19px] pl-28 text-[5px] leading-[6px] font-semibold text-[#2e333b]">
        <h3>Properties Panel</h3>
        <div className="flex">
          <h3 className="w-40">Details Panel</h3>
          <h3>Transitions</h3>
        </div>
      </div>
    </>
  );
}

function SystemSheet() {
  const marks: Row[] = [
    [1115, 275], [1115, 297], [1115, 321], [1115, 343], [1115, 366], [1115, 388],
    [1206, 275], [1206, 297], [1206, 321], [1206, 343], [1206, 366], [1206, 388], [1206, 412], [1206, 434],
    [1296, 275], [1296, 297], [1296, 321], [1296, 343], [1296, 412], [1296, 434],
  ];
  return (
    <svg className="h-full w-full" viewBox="0 0 162 91" aria-hidden="true">
      <g transform="translate(-381 -73) scale(0.35714 0.33333)">
        <rect x="1110" y="247" width="32" height="14" rx="6" fill="#fbe9e9" />
        <Words at={[[1114, 254, 24]]} c="#d64545" o={0.8} />
        <rect x="1436" y="247" width="43" height="14" rx="6" fill="#fdf0dc" />
        <Words at={[[1441, 254, 34]]} c="#e08a3c" o={0.9} />
        <Rules at={marks.map(([x, y]) => [x + 8, y, x + 69, y])} s="#cf8b9b" w={2} />
        <Words at={marks.map(([x, y]) => [x + 2, y + 1, 6])} o={0.7} h={4} />
        <Words at={marks.map(([x, y], i) => [x + 68 - (26 + ((i * 11) % 24)), y - 4, 26 + ((i * 11) % 24)])} o={0.65} h={3} />
        <Words at={[[1444, 268, 24], [1444, 274, 14], [1444, 280, 32], [1444, 293, 28], [1444, 299, 30], [1444, 304, 14]]} o={0.5} h={3} />
      </g>
    </svg>
  );
}

function StateCards() {
  const pairs = [
    [{ rule: 0, lines: ["Blur state"] }, { rule: 1, lines: ["Hover"] }],
    [{ rule: 2, lines: ["Rule applied"] }, { rule: 3, lines: HOVER }],
    [{ rule: 2, lines: ["Rule applied"], sub: "w/ condition" }, { rule: 3, lines: HOVER, sub: "w/ condition" }],
  ];
  return (
    <div className="flex gap-[13px] pl-[25px]">
      {pairs.map((pair, i) => (
        <div key={i} className="flex gap-[5px]">
          {pair.map((c: { rule: number; lines: string[]; sub?: string }, k) => (
            <figure key={k} className="flex w-[25px] flex-col">
              <figcaption className="flex h-[31px] flex-col items-center justify-end pb-0.5 text-[4px] leading-[5px] font-semibold whitespace-nowrap text-[#2e333b]">
                {c.lines.map((t) => (
                  <span key={t}>{t}</span>
                ))}
                {c.sub && <span className="text-[3px] font-medium">{c.sub}</span>}
              </figcaption>
              <svg className="h-[71px] w-full bg-white" viewBox="0 0 75 213" aria-hidden="true">
                <SideCard rule={c.rule} />
              </svg>
            </figure>
          ))}
        </div>
      ))}
    </div>
  );
}

/* ---------- columns ---------- */

function PropertiesColumn() {
  return (
    <Column>
      <Item name="Properties Panel - Anato..." size="h-[331px] w-[358px]">
        <Sheet
          top="h-9"
          label="w-10"
          gap="gap-[31px]"
          titles={VIEWS}
          rule="mr-[17px] ml-6"
          right
          bands={anatomy([
            [<Thumb><PanelBlur /></Thumb>, <Thumb><PanelRules /></Thumb>],
            [<Thumb><PanelBlur rule={161} /></Thumb>, <Thumb><PanelRules rule={110} /></Thumb>],
            [<Thumb><PanelBlur rule={161} /></Thumb>, <Thumb><PanelRules rule={110} lines={3} /></Thumb>],
          ])}
        />
        <Marks
          l={[[156, 82, 181, 82], [146, 189, 178, 189], [156, 283, 186, 283], [241, 159, 241, 166], [286, 270, 286, 290], [294, 31, 294, 41, GREEN], [292, 83, 292, 112, GREEN]]}
          d={[[311, 44, GREEN], [292, 112, GREEN], [241, 159], [311, 184]]}
          n={[[167, 78, 15, 2], [164, 187, 14, 1], [164, 280, 21, 2], [295, 32, 34, 1], [309, 48, 31, 3], [309, 187, 31, 5]]}
        />
      </Item>
      <Item name="Properties Panel - Trunca..." size="h-[231px] w-[358px]">
        <Sheet
          top="h-[33px]"
          label="w-10"
          gap="gap-[31px]"
          titles={VIEWS}
          foot={VIEWS}
          rule="mr-[17px] ml-[15px]"
          right
          bands={truncation([
            [<Thumb><PanelBlur rule={161} /></Thumb>, <Thumb><PanelRules rule={112} lines={9} /></Thumb>],
            [<Thumb><PanelBlur rule={161} /></Thumb>, <Thumb><PanelRules rule={110} lines={12} /></Thumb>],
          ])}
        />
        <Marks
          l={[[158, 90, 186, 90], [301, 86, 333, 86], [158, 187, 179, 187], [301, 191, 330, 191]]}
          n={[[164, 85, 22, 2], [312, 82, 21, 2], [165, 182, 13, 2], [309, 187, 20, 2]]}
        />
      </Item>
      <Item name="Properties Pa..." size="h-32 w-[241px]">
        <StateCards />
      </Item>
      <Item name="Properties Panel..." size="h-32 w-[264px]">
        <Pair top="h-7" left="pl-4">
          <Thumb><HrForm /></Thumb>
          <Thumb><HrForm toast={1} /></Thumb>
        </Pair>
        <Marks l={[[143, 98, 143, 105]]} n={[[144, 104, 20, 1]]} />
      </Item>
    </Column>
  );
}

function NotificationsColumn() {
  return (
    <Column>
      <Item name="Notifications - Anatomy" size="h-[331px] w-[360px]">
        <Sheet
          top="h-9"
          label="w-[53px]"
          titles={NOTICES}
          foot={NOTICES}
          rule="mx-[22px]"
          right
          bands={anatomy([
            [<Thumb><Notify /></Thumb>, <Thumb><Notify menu={1} /></Thumb>],
            [<Thumb><Notify rule={1} /></Thumb>, <Thumb><Notify alt={1} /></Thumb>],
            [<Thumb><Notify rule={2} /></Thumb>, <Thumb><Notify alt={1} /></Thumb>],
          ])}
        />
        <Marks
          l={[[236, 77, 236, 113], [107, 124, 107, 163], [243, 126, 243, 158], [107, 221, 107, 263], [243, 223, 243, 255]]}
          n={[[237, 113, 22, 1], [108, 126, 27, 3], [244, 127, 52, 2], [108, 222, 31, 3], [244, 223, 56, 2]]}
        />
      </Item>
      <Item name="Notificatio..." size="h-[231px] w-[206px]">
        <Sheet
          top="h-[33px]"
          label="w-[53px]"
          titles={["Send Notification Rule"]}
          rule="mx-5"
          bands={truncation([[<Thumb><Notify rule={4} /></Thumb>], [<Thumb><Notify rule={1} /></Thumb>]])}
        />
        <Marks l={[[168, 64, 201, 64], [117, 122, 117, 160]]} n={[[180, 58, 22, 3], [118, 123, 33, 3]]} />
      </Item>
      <Item name="Notifications - Affordanc..." size="h-[331px] w-[360px]">
        <Sheet
          top="h-9"
          label="w-[53px]"
          titles={NOTICES}
          rule="mx-[22px]"
          right
          bands={affordance([
            [<Thumb><Notify /></Thumb>, <Thumb><Notify alt={1} menu={1} /></Thumb>],
            [<Thumb><Notify /></Thumb>, <Thumb><Notify alt={1} menu={2} /></Thumb>],
            [
              <Thumb><Notify rule={3} /></Thumb>,
              <p className="flex h-[71px] w-[114px] items-center justify-center border border-t-0 border-dashed border-[#b3bbc6] text-[4px] leading-[5px] whitespace-nowrap text-[#3b4048]">
                Dynamic recipient chip has no hover state
              </p>,
            ],
          ])}
        />
        <Marks l={[[167, 222, 167, 262]]} n={[[145, 223, 21, 2]]} />
      </Item>
      <Item name="Notifications - Re..." size="h-32 w-[276px]">
        <Pair top="h-7" left="pl-[23px]">
          <Thumb><Notify rule={3} /></Thumb>
          <Thumb><Notify toast={1} /></Thumb>
        </Pair>
        <Marks
          l={[[130, 25, 130, 61], [190, 22, 190, 56], [247, 25, 247, 58], [152, 98, 152, 105]]}
          n={[[104, 26, 26, 1], [165, 23, 25, 2], [222, 25, 24, 1], [153, 105, 20, 1]]}
        />
      </Item>
    </Column>
  );
}

function TransitionsColumn() {
  return (
    <Column>
      <Item name="Transitio..." size="h-[331px] w-48">
        <Sheet
          top="h-9"
          label="w-[47px]"
          rule="mx-3.5"
          bands={anatomy([[<Thumb><Transit /></Thumb>], [<Thumb><Transit /></Thumb>], [<Thumb><Transit /></Thumb>]])}
        />
        <Marks
          l={[[84, 46, 93, 46, PINK], [127, 48, 127, 57], [23, 84, 62, 84], [23, 179, 62, 179], [25, 278, 62, 278]]}
          d={[[29, 42], [84, 46], [127, 57]]}
          n={[[27, 46, 21, 5], [25, 86, 24, 4], [24, 181, 25, 3], [27, 280, 20, 2]]}
        />
      </Item>
      <Item name="Transitio..." size="h-[231px] w-48">
        <Sheet
          top="h-[33px]"
          label="w-[47px]"
          rule="mr-5 ml-2.5"
          bands={truncation([[<Thumb><Transit kind={1} /></Thumb>], [<Thumb><Transit kind={2} /></Thumb>]])}
        />
        <Marks l={[[106, 70, 139, 70, "#9fdcb8"], [106, 182, 139, 182]]} n={[[113, 72, 26, 3], [113, 179, 26, 2]]} />
      </Item>
      <Item name="Transitio..." size="h-[235px] w-48">
        <Sheet
          top="h-[33px]"
          label="w-[43px]"
          rule="mx-3.5"
          bands={affordance([[<Thumb><Transit /></Thumb>], [<Thumb><Transit kind={3} /></Thumb>]])}
        />
        <Marks l={[[103, 71, 132, 71], [103, 168, 138, 168]]} n={[[107, 73, 25, 3], [110, 170, 28, 4]]} />
      </Item>
      <Item name="Transition - Remo..." size="h-32 w-[275px]">
        <Pair top="h-[26px]" left="pl-[22px]">
          <Thumb><Transit kind={3} /></Thumb>
          <Thumb><Transit toast={1} /></Thumb>
        </Pair>
        <Marks l={[[75, 42, 75, 70], [148, 94, 148, 104]]} n={[[77, 69, 13, 2], [149, 104, 20, 1]]} />
      </Item>
    </Column>
  );
}

function IntegrationsColumn() {
  return (
    <Column>
      <Item name="Integratio..." size="h-[331px] w-[191px]" behind="Rule">
        <Sheet
          top="h-9"
          label="w-[42px]"
          rule="mx-3.5"
          bands={anatomy([
            [<Thumb><Integrate /></Thumb>],
            [<Thumb><Integrate head={1} card={1} /></Thumb>],
            [<Thumb><Integrate head={1} card={1} /></Thumb>],
          ])}
        />
        <Marks
          l={[[80, 46, 89, 46, PINK], [123, 48, 123, 57], [127, 27, 127, 45], [157, 62, 184, 62], [127, 128, 127, 143], [156, 160, 184, 160], [127, 223, 127, 238], [157, 257, 185, 257]]}
          d={[[24, 43], [80, 46], [123, 57]]}
          n={[[23, 47, 20, 5], [129, 28, 19, 2], [162, 52, 21, 5], [129, 128, 19, 1], [165, 152, 19, 4], [129, 223, 34, 2], [164, 248, 21, 5]]}
        />
      </Item>
      <Item name="Integratio..." size="h-[231px] w-[191px]">
        <Sheet
          top="h-[33px]"
          label="w-[46px]"
          rule="mx-3.5"
          bands={truncation([[<Thumb><Integrate head={1} card={1} /></Thumb>], [<Thumb><Integrate head={1} card={1} /></Thumb>]])}
        />
        <Marks
          l={[[157, 26, 157, 45], [150, 60, 188, 60], [137, 122, 137, 139], [133, 157, 187, 157]]}
          n={[[125, 26, 32, 1], [171, 57, 17, 2], [116, 123, 21, 1], [166, 155, 22, 1]]}
        />
      </Item>
      <Item name="Integratio..." ready size="h-[331px] w-[191px]">
        <Sheet
          top="h-[33px]"
          label="w-[43px]"
          rule="mx-3.5"
          bands={affordance([[<Thumb><Integrate /></Thumb>], [<Thumb><Integrate /></Thumb>], [<Thumb><Integrate head={2} card={2} /></Thumb>]])}
        />
        <Marks
          l={[[156, 235, 168, 235, ORANGE], [156, 253, 168, 253, ORANGE]]}
          d={[[168, 235, ORANGE], [168, 253, ORANGE], [145, 241, "#f5f0fa"], [145, 257, "#f5f0fa"]]}
        />
      </Item>
      <Item name="Integrations & St..." size="h-[229px] w-[276px]">
        <Pair top="h-7" left="pl-[23px]" title="Step Run rule">
          <Thumb><Integrate head={2} card={1} /></Thumb>
          <Thumb><Integrate card={1} toast={194} /></Thumb>
        </Pair>
        <Pair top="h-[34px]" left="pl-[23px]" title="Integration rule">
          <Thumb><Integrate head={1} card={2} /></Thumb>
          <Thumb><Integrate head={1} toast={193} /></Thumb>
        </Pair>
        <Marks
          l={[[127, 24, 127, 40], [152, 98, 152, 105], [130, 128, 130, 160], [152, 203, 152, 210]]}
          n={[[101, 25, 26, 1], [153, 105, 20, 1], [104, 128, 26, 1], [153, 210, 20, 1]]}
        />
      </Item>
    </Column>
  );
}

function WorkflowColumn() {
  return (
    <Column>
      <Item name="Workflow..." size="h-[331px] w-[191px]">
        <Sheet
          top="h-9"
          label="w-[46px]"
          rule="mr-3 ml-4"
          bands={anatomy([[<Thumb><Flow /></Thumb>], [<Thumb><Flow rule={1} /></Thumb>], [<Thumb><Flow rule={1} /></Thumb>]])}
        />
        <Marks l={[[28, 195, 67, 195]]} n={[[28, 189, 21, 3], [28, 284, 18, 2]]} />
      </Item>
      <Item name="Workflow..." ready size="h-[137px] w-[191px]">
        <div className="pt-8 pl-[39px]">
          <Thumb><Flow rule={1} /></Thumb>
        </div>
        <Marks l={[[10, 61, 53, 61]]} n={[[10, 57, 27, 2]]} />
      </Item>
      <Item name="Workflow..." size="h-[331px] w-[191px]">
        <Sheet
          top="h-8"
          label="w-[43px]"
          rule="mx-3.5"
          bands={affordance([[<Thumb><Flow /></Thumb>], [<Thumb><Flow /></Thumb>], [<Thumb><Flow rule={2} /></Thumb>]])}
        />
        <Marks
          l={[[74, 24, 74, 58], [74, 125, 74, 157], [85, 258, 85, 268]]}
          n={[[75, 25, 24, 2], [75, 125, 10, 1], [70, 265, 15, 3]]}
        />
      </Item>
    </Column>
  );
}

export default function App() {
  return (
    <main className="flex min-h-screen flex-col gap-[78px] overflow-x-auto bg-[#b9b9b9] pt-[33px] pb-12 pl-[51px] font-['Inter',sans-serif]">
      <div className="flex items-start gap-3.5">
        <Item name="Anatomy - Rule afforda..." size="h-[149px] w-[341px]">
          <AffordanceSheet />
        </Item>
        <Item name="Syste..." size="h-[91px] w-[162px]">
          <SystemSheet />
        </Item>
      </div>
      <div className="grid grid-cols-[430fr_432fr_348fr_347fr_258fr] items-start">
        <PropertiesColumn />
        <NotificationsColumn />
        <TransitionsColumn />
        <IntegrationsColumn />
        <WorkflowColumn />
      </div>
    </main>
  );
}
